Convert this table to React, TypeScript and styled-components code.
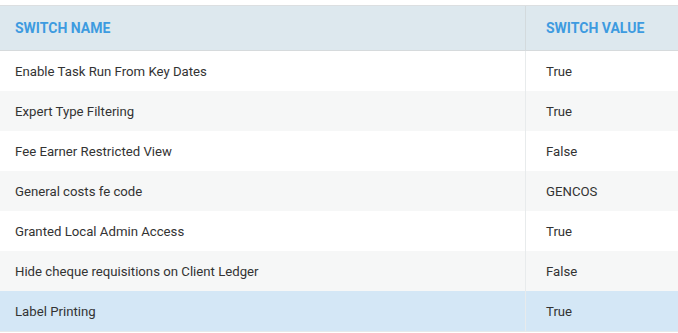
import React from 'react'
import styled, { createGlobalStyle } from 'styled-components'

const LookAndFeel = createGlobalStyle`
  html, body {
    margin: 0;
    padding: 0;
    background: #ffffff;
    font-family: Roboto, "Liberation Sans", sans-serif;
  }
`

const Page = styled.div`
  padding-top: 5px;
  width: 678px;
`

const Table = styled.div`
  display: grid;
  grid-template-columns: 525px 1fr;
  border-top: 1px solid #dcdfe1;
  border-bottom: 1px solid #e6e9eb;
`

const HeadCell = styled.div<{ $value?: boolean }>`
  height: 43px;
  display: flex;
  align-items: center;
  padding-left: ${p => (p.$value ? '20px' : '15px')};
  padding-bottom: 1px;
  background: #dde8ee;
  border-bottom: 1px solid #d6dadc;
  border-left: ${p => (p.$value ? '1px solid #d3dadd' : 'none')};
  color: #3d9be0;
  font-size: 14px;
  font-weight: 700;
  text-transform: uppercase;
`

const Cell = styled.div<{ $value?: boolean; $tone: 'plain' | 'alt' | 'selected' }>`
  height: 40px;
  display: flex;
  align-items: center;
  padding-left: ${p => (p.$value ? '20px' : '15px')};
  background: ${p =>
    p.$tone === 'selected' ? '#d4e7f6' : p.$tone === 'alt' ? '#f6f7f7' : '#ffffff'};
  border-left: ${p => (p.$value ? '1px solid #e8ebec' : 'none')};
  color: #333333;
  font-size: 13.2px;
`

const switches = [
  { name: 'Enable Task Run From Key Dates', value: 'True' },
  { name: 'Expert Type Filtering', value: 'True' },
  { name: 'Fee Earner Restricted View', value: 'False' },
  { name: 'General costs fe code', value: 'GENCOS' },
  { name: 'Granted Local Admin Access', value: 'True' },
  { name: 'Hide cheque requisitions on Client Ledger', value: 'False' },
  { name: 'Label Printing', value: 'True', selected: true },
]

const App = () => {
  return (
    <Page>
      <LookAndFeel />
      <Table>
        <HeadCell>Switch Name</HeadCell>
        <HeadCell $value>Switch Value</HeadCell>
        {switches.map((s, i) => {
          const tone = s.selected ? 'selected' : i % 2 ? 'alt' : 'plain'
          return (
            <React.Fragment key={s.name}>
              <Cell $tone={tone}>{s.name}</Cell>
              <Cell $tone={tone} $value>{s.value}</Cell>
            </React.Fragment>
          )
        })}
      </Table>
    </Page>
  )
}

export default App
